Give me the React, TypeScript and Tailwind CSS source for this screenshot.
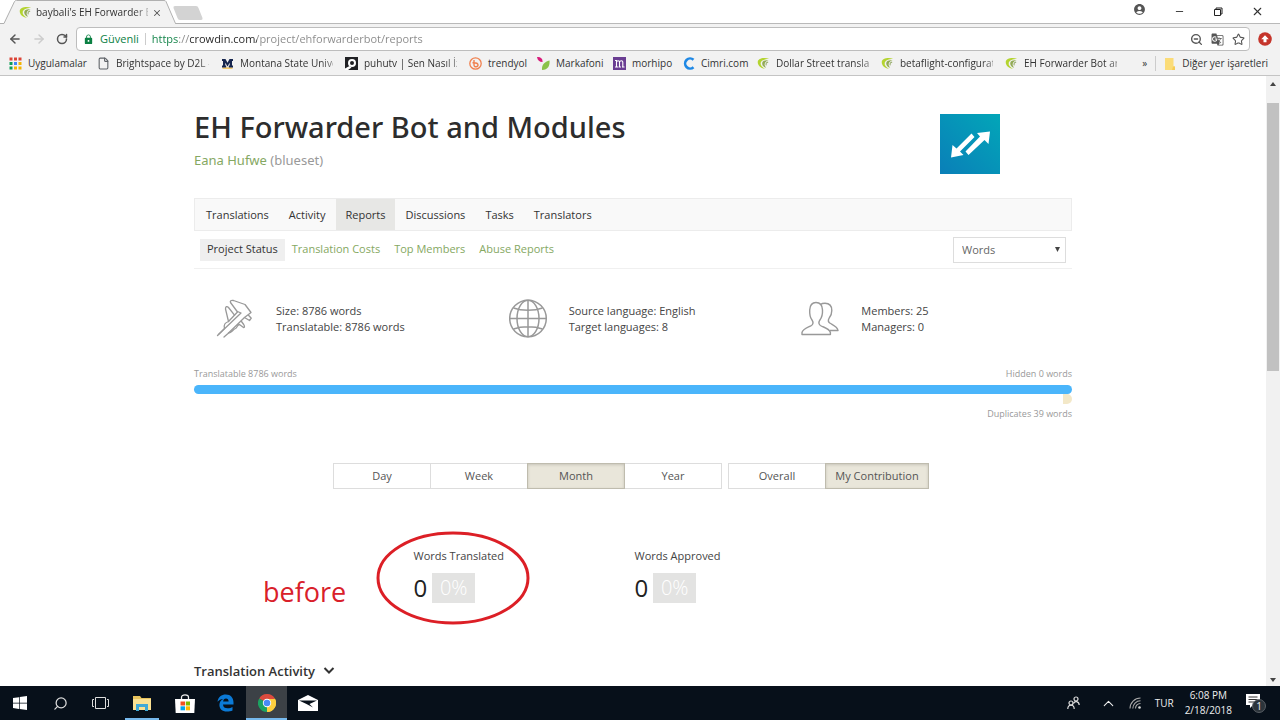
import React from 'react';
import { ArrowLeft, ArrowRight, RotateCw, File, Star, ZoomOut, X, Minus, Search, ChevronUp } from 'lucide-react';
import { MdAccountCircle, MdGTranslate, MdLock } from 'react-icons/md';

const CrowdinIcon = () => (
  <svg viewBox="0 0 14 14" className="h-[13px] w-[13px] shrink-0">
    <path d="M13 1.800C7.500.2 1 1.500.8 5.400c-.2 3.500 3 6.600 7.800 7.500C5.500 10.800 3.400 8.600 4 6.200 4.600 3.600 8.300 2.300 13 1.800Z" fill="#b4d430" />
    <path d="M12.500 3.600C8.500 3 5.600 4.300 5.600 6.900c0 2.500 2 4 4.200 4.700-1-1.300-1.900-2.700-1.500-4.200C8.700 5.500 10.600 4.300 12.500 3.600Z" fill="#93ab55" />
    <path d="M12 5.500c-2 .5-2.800 1.500-2 3.500" fill="none" stroke="#9aae70" strokeWidth="1.200" />
  </svg>
);

const PuhuIcon = () => (
  <svg viewBox="0 0 13 13" className="h-[13px] w-[13px] shrink-0">
    <path d="M0 0h13v13H0Z" fill="#202124" />
    <circle cx="7" cy="6" r="3" fill="none" stroke="#fff" strokeWidth="2" />
    <path d="M0 11.500 4.500 9l2 1.500L3 13H0Z" fill="#fff" />
  </svg>
);

const TrendyolIcon = () => (
  <svg viewBox="0 0 13 13" className="h-[13px] w-[13px] shrink-0" fill="none" stroke="#f0814f">
    <circle cx="6.500" cy="6.500" r="5.700" strokeWidth="1.300" />
    <path d="M5 3v5c0 2.500 4 2.300 4 0 0-2-2-2.300-4-2.300H3.500" strokeWidth="1.400" />
  </svg>
);

const MarkafoniIcon = () => (
  <svg viewBox="0 0 13 13" className="h-[13px] w-[13px] shrink-0">
    <path d="M0 0c3.500-.2 6 1.500 5.500 5C2.500 5 .5 3.500 0 0Z" fill="#d81b7a" />
    <path d="M12.500 3.500c.5 5-1.500 9.500-7.500 9.500-.5-5 2.500-8.500 7.500-9.500Z" fill="#8bc34a" />
  </svg>
);

const CimriIcon = () => (
  <svg viewBox="0 0 13 13" className="h-[13px] w-[13px] shrink-0">
    <path d="M11.500 2.800A5 5 0 1 0 11.500 10.200" fill="none" stroke="#1e88e5" strokeWidth="2.600" />
  </svg>
);

const MorhipoIcon = () => (
  <svg viewBox="0 0 13 13" className="h-[13px] w-[13px] shrink-0">
    <path d="M0 0h13v13H0Z" fill="#6a3d92" />
    <path d="M2 3.500h1.500v6.500M3.500 5c.5-1.600 3-1.600 3 0v5M6.500 5c.5-1.600 3.300-1.600 3.300 0v5M2 10h3M5.500 10H8M9 10h2.500" fill="none" stroke="#fff" strokeWidth="1.100" />
  </svg>
);

const MontanaIcon = () => (
  <svg viewBox="0 0 13 13" className="h-[13px] w-[13px] shrink-0">
    <path d="M1.500 10.500h10v1.200h-10Z" fill="#f2b632" />
    <path d="M1 2h3.500l2 3.800L8.500 2H12v2h-1v4.500h1v2H7.800v-2h.9V5.800L6.500 9.500 4.300 5.800v2.700h.9v2H1v-2h1V4H1Z" fill="#17264f" />
  </svg>
);

const appColors = ['#db4437', '#db4437', '#db4437', '#0f9d58', '#4285f4', '#f4b400', '#0f9d58', '#f4b400', '#f4b400'];

const AppsIcon = () => (
  <svg viewBox="0 0 13 13" className="h-[13px] w-[13px] shrink-0">
    {appColors.map((color, index) => (
      <rect key={index} x={(index % 3) * 4.500 + 0.5} y={Math.floor(index / 3) * 4.500 + 0.5} width="3" height="3" fill={color} />
    ))}
  </svg>
);

const PageIcon = () => <File size={13} strokeWidth={2} className="shrink-0 text-[#5f6368]" />;

const bookmarks = [
  { icon: AppsIcon, title: 'Uygulamalar', width: 'w-[57px]' },
  { icon: PageIcon, title: 'Brightspace by D2L -', width: 'w-[93px]', fade: true },
  { icon: MontanaIcon, title: 'Montana State Unive', width: 'w-[93px]', fade: true },
  { icon: PuhuIcon, title: 'puhutv | Sen Nasıl İzl', width: 'w-[93px]', fade: true },
  { icon: TrendyolIcon, title: 'trendyol', width: 'w-[37px]' },
  { icon: MarkafoniIcon, title: 'Markafoni', width: 'w-[45px]' },
  { icon: MorhipoIcon, title: 'morhipo', width: 'w-[38px]' },
  { icon: CimriIcon, title: 'Cimri.com', width: 'w-[44px]' },
  { icon: CrowdinIcon, title: 'Dollar Street translati', width: 'w-[93px]', fade: true },
  { icon: CrowdinIcon, title: 'betaflight-configurat', width: 'w-[93px]', fade: true },
  { icon: CrowdinIcon, title: 'EH Forwarder Bot and', width: 'w-[93px]', fade: true },
];

const TabStrip = () => (
  <div className="relative flex h-6 items-stretch border-b border-[#b9b9b9] bg-white">
    <svg viewBox="0 0 210 24" className="absolute left-0 top-0 h-6 w-[210px]">
      <path d="M3 24 14.500 1.500Q15 .5 16.500.5H164q1.500 0 2 1L175.500 24Z" fill="#f2f2f2" />
      <path d="M0 23.500H4L14.500 1.500Q15 .5 16.500.5H164q1.500 0 2 1L175.500 23.500H210" fill="none" stroke="#b0b0b0" />
      <path d="M175 6h21q2 0 2.500 2l4 10q.5 2-1.500 2h-21q-2 0-2.500-2l-4-10q-.5-2 1.500-2Z" fill="#d3d3d3" />
    </svg>
    <div className="relative flex items-center gap-1 pl-[19px] pt-0.5">
      <CrowdinIcon />
      <span className="w-28 whitespace-nowrap text-[10px] text-[#333] [mask-image:linear-gradient(90deg,#000_98px,rgba(0,0,0,0.3)_112px)] [mask-repeat:no-repeat]">
        baybali's EH Forwarder B
      </span>
      <button aria-label="Close tab" className="text-[#555]"><X size={10} strokeWidth={2.5} /></button>
    </div>
    <div className="relative ml-auto flex items-center gap-7 pr-4 text-[#333]">
      <button aria-label="Account" className="mb-1 text-[#555]"><MdAccountCircle size={13} /></button>
      <button aria-label="Minimize"><Minus size={11} strokeWidth={2} /></button>
      <button aria-label="Restore">
        <svg viewBox="0 0 10 10" className="h-2.5 w-2.5" fill="none" stroke="#222">
          <path d="M1.500 2.500h6v6h-6ZM3 2.500V1h6v6H7.500" />
        </svg>
      </button>
      <button aria-label="Close"><X size={13} strokeWidth={2} /></button>
    </div>
  </div>
);

const Toolbar = () => (
  <div className="flex h-[30px] items-center gap-2 bg-[#f2f2f2] px-2 text-[#555]">
    <div className="flex items-center gap-2.5">
      <button aria-label="Back"><ArrowLeft size={14} strokeWidth={2.5} /></button>
      <button aria-label="Forward" className="text-[#ccc]"><ArrowRight size={14} strokeWidth={2.5} /></button>
      <button aria-label="Reload"><RotateCw size={12} strokeWidth={3} /></button>
    </div>
    <div className="flex h-6 flex-1 items-center rounded-sm border border-[#bdbdbd] bg-white pl-1.5 pr-1 text-[11px]">
      <MdLock size={11} className="text-[#0b8043]" />
      <span className="ml-1.5 text-[#0b8043]">Güvenli</span>
      <span className="mx-1.5 h-3 w-px bg-[#ccc]" />
      <input
        aria-label="Address"
        defaultValue="https://crowdin.com/project/ehforwarderbot/reports"
        className="min-w-0 flex-1 bg-[linear-gradient(90deg,#0b8043_27px,#888_27px,#888_38px,#222_38px,#222_105px,#888_105px)] bg-clip-text text-transparent outline-none"
      />
      <div className="flex items-center gap-2">
        <button aria-label="Zoom"><ZoomOut size={13} strokeWidth={2.5} /></button>
        <button aria-label="Translate"><MdGTranslate size={13} /></button>
        <button aria-label="Bookmark"><Star size={13} strokeWidth={2} /></button>
      </div>
    </div>
    <button aria-label="Update">
      <svg viewBox="0 0 14 14" className="h-3.5 w-3.5">
        <circle cx="7" cy="7" r="6.800" fill="#c5352b" />
        <path d="m7 3.200 3.800 4H8.500v3h-3v-3H3.200Z" fill="#fff" />
      </svg>
    </button>
  </div>
);

const BookmarkBar = () => (
  <div className="flex h-[22px] items-center border-b border-[#c4c4c4] bg-[#f2f2f2] pb-0.5 pl-[9px] pr-3 text-[10px] text-[#333]">
    <div className="flex min-w-0 flex-1 items-center gap-3">
      {bookmarks.map((bookmark, index) => (
        <a key={index} href="#" className="flex shrink-0 items-center gap-1.5">
          <bookmark.icon />
          <span className={`${bookmark.width} whitespace-nowrap ${bookmark.fade ? '[mask-image:linear-gradient(90deg,#000_80px,transparent_110px)]' : ''}`}>
            {bookmark.title}
          </span>
        </a>
      ))}
    </div>
    <button aria-label="More bookmarks" className="mr-2">»</button>
    <a href="#" className="flex items-center gap-1.5 border-l border-[#ccc] pl-2">
      <svg viewBox="0 0 12 12" className="h-3 w-3">
        <path d="M1 0h8.500v8.500H11V12H1Z" fill="#fbdc78" />
        <path d="M9 8.500h2V12H8Z" fill="#f6cc55" />
      </svg>
      Diğer yer işaretleri
    </a>
  </div>
);

const CaliperIcon = () => (
  <svg viewBox="0 0 38 40" className="h-10 w-[38px]" fill="none" stroke="#999" strokeWidth="1.300" strokeLinejoin="round" strokeLinecap="round">
    <path d="M1.500 36.500 8.500 29.500C7.500 26 9 23.500 12.500 22.500L21.500 13 14.500 3.500C13.800 1.800 15 1 17.500 1.500L29 5.500 35 13.500 28.500 18.500 12 34.500 8 38" />
    <path d="M12.500 22.500 9.500 10C9.500 7.500 11 6.800 12.500 8.500L18.500 16.200M2.500 35.500 25 14 21.500 12.500" />
    <path d="M12.500 34c3.500 0 4-3.500 7-4.500 2-1 1.500-4 4-4l4 3c1.300.2 1.200-1.500.2-3L25.500 22.500M28.500 18.500l5 3 1.800-2.300-2.800-3" />
  </svg>
);

const GlobeIcon = () => (
  <svg viewBox="0 0 40 40" className="h-10 w-10" fill="none" stroke="#999" strokeWidth="1.500">
    <circle cx="19" cy="19.500" r="18.300" />
    <ellipse cx="19" cy="19.500" rx="11" ry="18.300" />
    <path d="M19 1.200v36.600M.7 19.500h36.600M4.500 9c8 3 21 3 29 0M4.500 30c8-3 21-3 29 0" />
  </svg>
);

const MembersIcon = () => (
  <svg viewBox="0 0 38 40" className="h-10 w-[38px]" fill="none" stroke="#999" strokeWidth="1.400" strokeLinejoin="round">
    <path d="M1 35.500v-2c1-4 6-5 9.500-7 2-1.500 1.500-4 .5-5.500-2.300-3-2.500-6-2.300-10C9 6 11 3.500 15 3.500s6.300 2.500 6.500 7.500c.2 4-.3 7-2.600 10-1 1.500-1.500 4 .5 5.500 3.500 2 9.100 3 10 7v2Z" />
    <path d="M19.500 5.500c1-.8 2.500-1.200 4.500-1.200 4.500 0 6.800 2.500 6.800 7.200 0 4-.8 5.500-2.600 7.500-1 1.800-1 4 .5 5 3 2 7.800 3.500 8.300 7.500h-8" />
  </svg>
);

const infoBlocks = [
  { icon: CaliperIcon, lines: ['Size: 8786 words', 'Translatable: 8786 words'] },
  { icon: GlobeIcon, lines: ['Source language: English', 'Target languages: 8'] },
  { icon: MembersIcon, lines: ['Members: 25', 'Managers: 0'] },
];

const mainTabs = ['Translations', 'Activity', 'Reports', 'Discussions', 'Tasks', 'Translators'];
const reportTabs = ['Project Status', 'Translation Costs', 'Top Members', 'Abuse Reports'];
const periods = ['Day', 'Week', 'Month', 'Year'];
const stats = ['Words Translated', 'Words Approved'];

const selectedButton = 'border-[#bfbcae] bg-[#e9e6da] shadow-[inset_0_1px_3px_rgba(0,0,0,0.15)]';

const ProjectHeader = () => (
  <header className="flex items-start justify-between pr-[72px] pt-8">
    <div>
      <h1 className="font-['Noto_Sans',sans-serif] text-[29px] font-medium leading-[38px] text-[#2d2d2d]">EH Forwarder Bot and Modules</h1>
      <p className="mt-1 font-['Noto_Sans',sans-serif] text-[13px] leading-5 text-[#999]">
        <a href="#" className="text-[#85a862]">Eana Hufwe</a> (blueset)
      </p>
    </div>
    <svg viewBox="0 0 60 60" className="mt-1.5 h-[60px] w-[60px]">
      <defs>
        <linearGradient id="logo" x1="0" y1="1" x2="1" y2="0">
          <stop offset="0" stopColor="#0a7fb8" />
          <stop offset="1" stopColor="#02a6b8" />
        </linearGradient>
      </defs>
      <path d="M0 0h60v60H0Z" fill="url(#logo)" />
      <path d="M31.500 19.500 34.500 23 20 37.500 23.500 41 11 43.500 12.500 31 16.500 34.500Z" fill="#fff" />
      <path d="M28.500 41 25.500 37.500 40 22.500 37 19 50 17.500 48.500 30 44.500 26Z" fill="#fff" />
    </svg>
  </header>
);

const ProjectNav = () => (
  <>
    <nav className="mt-6 flex h-[33px] items-center border border-[#ececec] bg-[#f9f9f9] pl-px text-[11px] text-[#333]">
      {mainTabs.map((tab) => (
        <a key={tab} href="#" className={`flex h-full items-center px-2.5 pt-0.5 ${tab === 'Reports' ? 'bg-[#e7e7e5]' : ''}`}>
          {tab}
        </a>
      ))}
    </nav>
    <div className="flex h-[38px] items-center justify-between border-b border-[#f0f0f0] px-1.5">
      <nav className="flex text-[11px] leading-4">
        {reportTabs.map((tab, index) => (
          <a key={tab} href="#" className={`px-[7px] pb-1 pt-0.5 ${index === 0 ? 'bg-[#efefef] text-[#333]' : 'text-[#85a862]'}`}>
            {tab}
          </a>
        ))}
      </nav>
      <div className="relative">
        <select aria-label="Unit" className="h-[26px] w-[113px] appearance-none border border-[#ddd] bg-white pl-2 text-[11px] text-[#666]">
          <option>Words</option>
        </select>
        <svg viewBox="0 0 6 6" className="pointer-events-none absolute right-1.5 top-[11px] h-[5px] w-[5px]">
          <path d="M0 0h6L3 6Z" fill="#444" />
        </svg>
      </div>
    </div>
  </>
);

const WordsBar = () => (
  <section className="mt-[27px] text-[9px] leading-4 text-[#999]">
    <div className="flex justify-between">
      <span>Translatable 8786 words</span>
      <span>Hidden 0 words</span>
    </div>
    <div className="mt-[3px] h-[9px] rounded-full bg-[#4ab5fb]" />
    <div className="ml-auto h-2.5 w-[9px] rounded-r-full bg-[#f3e8c8]" />
    <p className="mt-0.5 text-right">Duplicates 39 words</p>
  </section>
);

const Filters = () => (
  <div className="mt-[41px] flex justify-center gap-1.5 pr-1 text-[11px] text-[#555]">
    <div className="flex">
      {periods.map((period) => (
        <button key={period} className={`-mr-px h-[26px] w-[98px] border ${period === 'Month' ? `relative ${selectedButton}` : 'border-[#ddd]'}`}>
          {period}
        </button>
      ))}
    </div>
    <div className="ml-px flex">
      <button className="-mr-px h-[26px] w-[98px] border border-[#ddd]">Overall</button>
      <button className={`h-[26px] w-[104px] border ${selectedButton}`}>My Contribution</button>
    </div>
  </div>
);

const Stats = () => (
  <section className="relative mt-[59px] pl-[25%]">
    <div className="flex">
      {stats.map((label) => (
        <div key={label} className="w-[221px]">
          <p className="text-[11px] leading-4 text-[#444]">{label}</p>
          <div className="mt-[9px] flex items-center gap-[5px] text-2xl leading-[30px]">
            <span className="text-[#222]">0</span>
            <span className="flex h-[30px] w-[43px] items-center justify-center bg-[#e3e3e2] text-xl font-light text-white">0%</span>
          </div>
        </div>
      ))}
    </div>
    <span className="absolute left-[69px] top-6 text-[27px] leading-10 text-[#d9202a]">before</span>
    <svg viewBox="0 0 154 94" className="absolute -top-[17px] left-[182px] h-[94px] w-[154px]">
      <ellipse cx="77" cy="47" rx="75" ry="45" fill="none" stroke="#dc1f26" strokeWidth="3" />
    </svg>
  </section>
);

const ScrollBar = () => (
  <div className="flex w-3.5 flex-col items-center bg-[#f1f1f1] py-1">
    <svg viewBox="0 0 6 4" className="my-0.5 h-1 w-1.5"><path d="M0 4h6L3 0Z" fill="#444" /></svg>
    <div className="mt-[15px] h-[268px] w-3 bg-[#c1c1c1]" />
    <svg viewBox="0 0 6 4" className="mt-auto h-1 w-1.5"><path d="M0 0h6L3 4Z" fill="#444" /></svg>
  </div>
);

const WindowsIcon = () => (
  <svg viewBox="0 0 14 14" className="h-3.5 w-3.5" fill="#fff">
    <path d="M0 2 6 1.200v5.500H0ZM6.700 1.100 14 0v6.700H6.700ZM0 7.400h6v5.500L0 12ZM6.700 7.400H14V14l-7.300-1Z" />
  </svg>
);

const TaskViewIcon = () => (
  <svg viewBox="0 0 17 14" className="h-3.5 w-[17px]" fill="none" stroke="#ddd">
    <path d="M3.500 1.500h10v11h-10ZM2 3.500H.5v7H2M15 3.500h1.500v7H15" />
  </svg>
);

const FolderIcon = () => (
  <svg viewBox="0 0 20 17" className="h-[17px] w-5">
    <path d="M1 1h7l1.500 2H19v12H1Z" fill="#e8c35c" />
    <path d="M1 4h18v11H1Z" fill="#fae192" />
    <path d="M4 9h12v7h-3v-4H7v4H4Z" fill="#40a9d6" />
  </svg>
);

const StoreIcon = () => (
  <svg viewBox="0 0 20 19" className="h-[19px] w-5">
    <path d="M6.500 5V3.500C6.500 0 13.500 0 13.500 3.500V5" fill="none" stroke="#eee" strokeWidth="1.300" />
    <path d="M0 5h20l-.7 14H.7Z" fill="#fff" />
    <path d="M5.500 7.500H10v4H5.500Z" fill="#f25022" />
    <path d="M10.800 7.500h4.200v4h-4.200Z" fill="#7fba00" />
    <path d="M5.500 12.300H10v4H5.500Z" fill="#00a4ef" />
    <path d="M10.800 12.300h4.200v4h-4.200Z" fill="#ffb900" />
  </svg>
);

const EdgeIcon = () => (
  <svg viewBox="0 0 17 18" className="h-[18px] w-[17px]">
    <path d="M.5 7.800C1.300 2.800 4.500.5 8.800.5c5 0 7.700 3.500 7.700 8v2H6c.1 2.700 2 3.800 4.700 3.800 1.900 0 3.500-.5 4.800-1.300v3.500c-1.600.7-3.300 1-5.500 1-5 0-7.600-2.700-7.600-6.500C2.400 8 4 6 6.200 4.900 4 4.900 1.800 6 .5 7.800ZM6.100 7.500h5.500c0-2-.9-3-2.600-3S6.400 5.600 6.100 7.500Z" fill="#0b7ad6" fillRule="evenodd" />
  </svg>
);

const ChromeIcon = () => (
  <svg viewBox="0 0 18 18" className="h-[18px] w-[18px]">
    <path d="M9 9 1.200 4.500A9 9 0 0 1 16.800 4.500Z" fill="#dd4b3e" />
    <path d="M9 9 16.800 4.500A9 9 0 0 1 9 18Z" fill="#fdcf3f" />
    <path d="M9 9v9A9 9 0 0 1 1.200 4.500Z" fill="#1ca261" />
    <path d="M9 5h8.100A9 9 0 0 1 9 18l3.500-7Z" fill="#fdcf3f" />
    <circle cx="9" cy="9" r="4.200" fill="#fff" />
    <circle cx="9" cy="9" r="3.300" fill="#4a8af4" />
  </svg>
);

const MailIcon = () => (
  <svg viewBox="0 0 20 16" className="h-4 w-5">
    <path d="M0 5 10 0l10 5v11H0Z" fill="#fff" />
    <path d="M1 5.500h18L11.500 9l3.500 3.500L8.500 9Z" fill="#07101a" />
  </svg>
);

const SearchIcon = () => <Search size={15} strokeWidth={2} className="-scale-x-100 text-[#ddd]" />;

const taskbarApps = [
  { icon: WindowsIcon, label: 'Start', style: 'w-10' },
  { icon: SearchIcon, label: 'Search', style: 'w-10' },
  { icon: TaskViewIcon, label: 'Task view', style: 'w-10' },
  { icon: FolderIcon, label: 'Explorer', style: 'mx-[5px] w-[34px] border-b-2 border-[#76b9ed] pt-0.5' },
  { icon: StoreIcon, label: 'Store', style: 'w-[41px]' },
  { icon: EdgeIcon, label: 'Edge', style: 'w-[41px]' },
  { icon: ChromeIcon, label: 'Chrome', style: 'w-[41px] border-b-2 border-[#76b9ed] bg-[#3c4146] pt-0.5' },
  { icon: MailIcon, label: 'Mail', style: 'w-[41px]' },
];

const Taskbar = () => (
  <footer className="flex h-[34px] items-stretch bg-[#07101a] text-[#eee]">
    {taskbarApps.map((app) => (
      <button key={app.label} aria-label={app.label} className={`flex items-center justify-center ${app.style}`}>
        <app.icon />
      </button>
    ))}
    <div className="ml-auto flex items-center pr-3.5 text-[10px]">
      <button aria-label="People">
        <svg viewBox="0 0 13 14" className="h-3.5 w-[13px]" fill="none" stroke="#ddd" strokeWidth="1.200">
          <circle cx="4" cy="7" r="2" />
          <path d="M.8 13c0-5 6.400-5 6.400 0" />
          <circle cx="9" cy="3" r="2" />
          <path d="M6.500 7.500c1-3 5.500-2.500 5.700 1.500" />
        </svg>
      </button>
      <button aria-label="Hidden icons" className="ml-5"><ChevronUp size={17} strokeWidth={1.5} /></button>
      <button aria-label="Network" className="ml-3">
        <svg viewBox="0 0 12 12" className="h-3 w-3" fill="none" stroke="#aaa" strokeWidth="1.100">
          <path d="M1 11.500A10.500 10.500 0 0 1 11.500 1M3.800 11.500A7.700 7.700 0 0 1 11.500 3.800M6.500 11.500a5 5 0 0 1 5-5" />
          <circle cx="10.500" cy="10.500" r="1.300" fill="#ddd" stroke="none" />
        </svg>
      </button>
      <span className="ml-3.5">TUR</span>
      <div className="ml-[11px] text-center leading-[15px]">
        <p>6:08 PM</p>
        <p>2/18/2018</p>
      </div>
      <button aria-label="Notifications" className="relative ml-3.5">
        <svg viewBox="0 0 20 20" className="h-5 w-5">
          <path d="M0 1h14v11H7l-3 3v-3H0Z" fill="#fff" />
          <path d="M2.500 4h9M2.500 6.500h9M2.500 9h6" stroke="#333" />
          <circle cx="13" cy="13" r="6.500" fill="#2c343b" stroke="#6a6f74" strokeWidth=".8" />
        </svg>
        <span className="absolute bottom-0 right-1 text-[10px] leading-[14px]">1</span>
      </button>
    </div>
  </footer>
);

const App = () => {
  return (
    <div className="flex h-screen flex-col bg-white font-['Open_Sans',sans-serif]">
      <TabStrip />
      <Toolbar />
      <BookmarkBar />
      <div className="flex min-h-0 flex-1">
        <main className="min-w-0 flex-1 overflow-hidden">
          <div className="mx-auto max-w-[878px]">
            <ProjectHeader />
            <ProjectNav />
            <section className="mt-[30px] grid grid-cols-3 text-[11px] leading-4 text-[#444]">
              {infoBlocks.map((block, index) => (
                <div key={index} className="flex items-center pl-[22px]">
                  <div className="w-[60px]"><block.icon /></div>
                  <div>
                    {block.lines.map((line) => <p key={line}>{line}</p>)}
                  </div>
                </div>
              ))}
            </section>
            <WordsBar />
            <Filters />
            <Stats />
            <h2 className="mt-[58px] flex items-center gap-2 text-[13px] font-semibold leading-5 text-[#333]">
              Translation Activity
              <svg viewBox="0 0 12 8" className="h-2 w-3" fill="none" stroke="#333" strokeWidth="2">
                <path d="m1.500 1 4.500 4.500L10.500 1" />
              </svg>
            </h2>
          </div>
        </main>
        <ScrollBar />
      </div>
      <Taskbar />
    </div>
  );
};

export default App;
